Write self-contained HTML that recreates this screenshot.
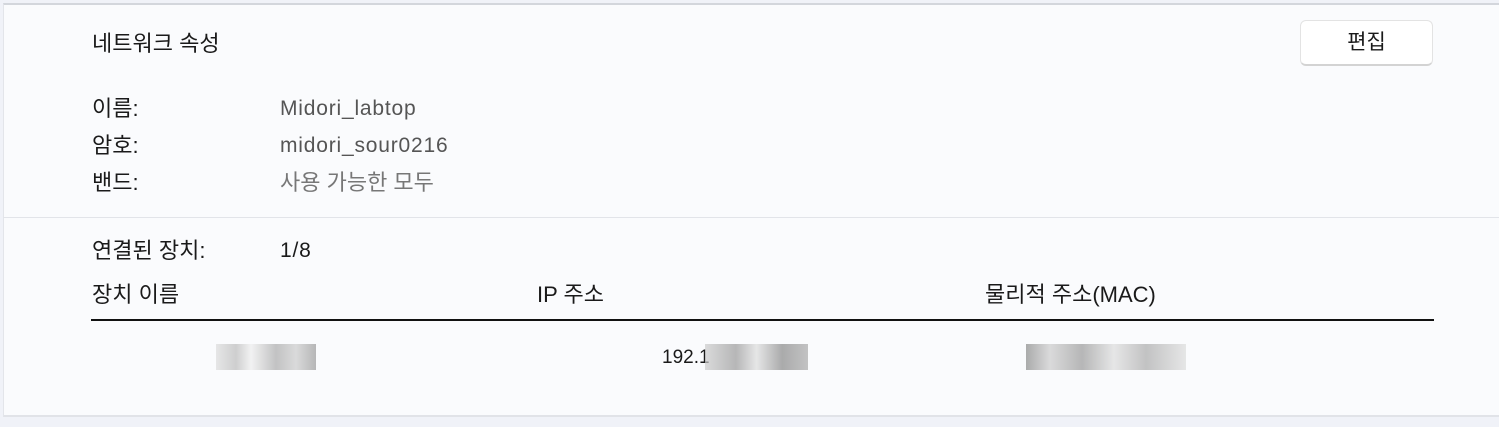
<!DOCTYPE html>
<html><head><meta charset="utf-8"><style>
body{margin:0;width:1499px;height:427px;background:#f0f2f8;overflow:hidden;font-family:"Liberation Sans","Noto Sans CJK KR",sans-serif;font-size:22px;color:#1a1a1a;position:relative}
.card{position:absolute;left:3px;top:3px;width:1496px;height:414px;background:#fafbfd;border-top:2px solid #d3d6dc;border-left:1px solid #e3e5ea;border-bottom:2px solid #e1e3e8;box-sizing:border-box}
.t{position:absolute;white-space:nowrap;line-height:24px}
.v{letter-spacing:0.8px;font-size:21px}
.g{color:#555}
.btn{position:absolute;left:1300px;top:20px;width:133px;height:46px;box-sizing:border-box;background:#fff;border:1px solid #e3e3e3;border-bottom:2px solid #d3d3d3;border-radius:6px;text-align:center;line-height:44px;font-size:21px}
.sep{position:absolute;left:3px;top:217px;width:1496px;height:1px;background:#e2e4e9}
.line{position:absolute;left:91px;top:319px;width:1343px;height:2px;background:#111}
.b{position:absolute;background:#aaa}
</style></head><body>
<div class="card"></div>
<div class="t" style="left:92px;top:32px">네트워크 속성</div>
<div class="btn">편집</div>
<div class="t" style="left:92px;top:97px">이름:</div>
<div class="t g v" style="left:280px;top:97px">Midori_labtop</div>
<div class="t" style="left:92px;top:134px">암호:</div>
<div class="t g v" style="left:280px;top:134px">midori_sour0216</div>
<div class="t" style="left:92px;top:171px">밴드:</div>
<div class="t" style="left:280px;top:171px;color:#777">사용 가능한 모두</div>
<div class="sep"></div>
<div class="t" style="left:92px;top:239px">연결된 장치:</div>
<div class="t v" style="left:280px;top:239px">1/8</div>
<div class="t" style="left:92px;top:283px">장치 이름</div>
<div class="t" style="left:537px;top:283px">IP 주소</div>
<div class="t" style="left:985px;top:283px">물리적 주소(MAC)</div>
<div class="line"></div>
<div class="b" style="left:216px;top:344px;width:100px;height:26px;background:linear-gradient(90deg,#ddd,#bbb 20%,#eee 35%,#aaa 60%,#ccc 80%,#999);opacity:.7"></div>
<div class="t" style="left:662px;top:346px;font-size:19px">192.1</div>
<div class="b" style="left:705px;top:344px;width:103px;height:26px;background:linear-gradient(90deg,#ccc,#999 30%,#ddd 50%,#888 75%,#aaa);opacity:.7"></div>
<div class="b" style="left:1026px;top:344px;width:160px;height:26px;background:linear-gradient(90deg,#888,#ccc 15%,#999 35%,#ddd 55%,#aaa 75%,#ddd);opacity:.7"></div>
</body></html>
